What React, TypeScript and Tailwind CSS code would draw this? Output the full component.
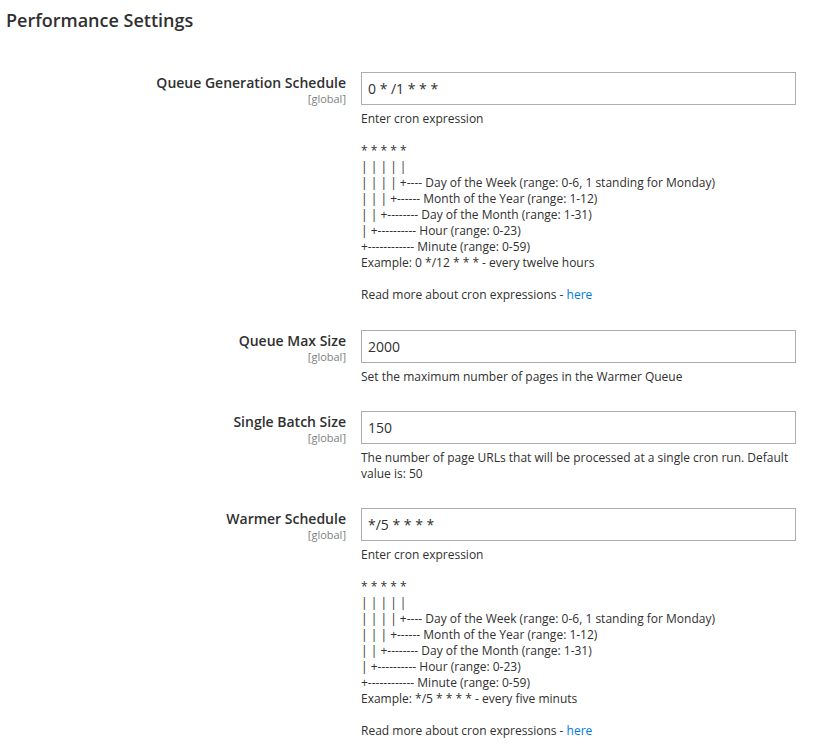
import React from 'react';

const CRON_LINES = [
    '* * * * *',
    '| | | | |',
    '| | | | +---- Day of the Week (range: 0-6, 1 standing for Monday)',
    '| | | +------ Month of the Year (range: 1-12)',
    '| | +-------- Day of the Month (range: 1-31)',
    '| +---------- Hour (range: 0-23)',
    '+------------ Minute (range: 0-59)',
];

const CronHelp: React.FC<{ example: string }> = ({ example }) => (
    <>
        Enter cron expression
        <br />
        <br />
        {CRON_LINES.map((line) => (
            <React.Fragment key={line}>
                {line}
                <br />
            </React.Fragment>
        ))}
        {example}
        <br />
        <br />
        Read more about cron expressions - <a href="#" className="text-[#007bdb]">here</a>
    </>
);

interface FieldProps {
    label: string;
    value: string;
    children: React.ReactNode;
}

const Field: React.FC<FieldProps> = ({ label, value, children }) => (
    <div className="flex mb-[26px] first:mb-[27px]">
        <div className="w-[346px] shrink-0 text-right pt-[2px]">
            <div className="text-[14px] leading-[17px] font-semibold text-[#303030]">{label}</div>
            <div className="mt-[1px] text-[11px] leading-[14px] text-[#808080]">[global]</div>
        </div>
        <div className="ml-[15px] w-[435px]">
            <input
                type="text"
                defaultValue={value}
                className="w-full h-[33px] border border-[#adadad] px-[6px] text-[14px] text-[#303030] outline-none bg-white"
            />
            <div className="mt-[6px] text-[12px] leading-[16px] text-[#303030]">{children}</div>
        </div>
    </div>
);

export default function App() {
    return (
        <div className="bg-white min-h-screen font-['Open_Sans',sans-serif] w-[818px]">
            {/* section title */}
            <h2 className="pl-[6px] pt-[8px] text-[18px] leading-[24px] font-semibold text-[#303030]">
                Performance Settings
            </h2>

            <div className="mt-[40px]">
                <Field label="Queue Generation Schedule" value="0 * /1 * * *">
                    <CronHelp example="Example: 0 */12 * * * - every twelve hours" />
                </Field>
                <Field label="Queue Max Size" value="2000">
                    Set the maximum number of pages in the Warmer Queue
                </Field>
                <Field label="Single Batch Size" value="150">
                    The number of page URLs that will be processed at a single cron run. Default value is: 50
                </Field>
                <Field label="Warmer Schedule" value="*/5 * * * *">
                    <CronHelp example="Example: */5 * * * * - every five minuts" />
                </Field>
            </div>
        </div>
    );
}
